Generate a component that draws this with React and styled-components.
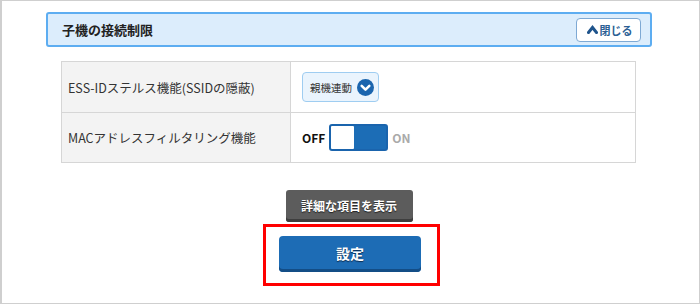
import React from "react";
import styled, { createGlobalStyle } from "styled-components";

const Global = createGlobalStyle`
  html, body { margin: 0; padding: 0; background: #fff; }
  body { font-family: "Noto Sans CJK JP", "Noto Sans", sans-serif; color: #333; }
`;

const Frame = styled.div`
  box-sizing: border-box;
  width: 700px;
  height: 304px;
  border: 1px solid #cfcfcf;
  border-left-width: 2px;
  padding: 11px 47px 0 44px;
  display: flex;
  flex-direction: column;
`;

const Header = styled.div`
  box-sizing: border-box;
  height: 35px;
  border: 2px solid #5dadf1;
  border-radius: 3px;
  background: #dcedfc;
  display: flex;
  align-items: center;
  justify-content: space-between;
  padding: 0 9px 0 14px;
`;

const Title = styled.h2`
  margin: 0;
  font-size: 13px;
  font-weight: 700;
  color: #222;
`;

const CloseButton = styled.button`
  box-sizing: border-box;
  width: 65px;
  height: 24px;
  background: #fff;
  border: 1px solid #7ea9d4;
  border-radius: 4px;
  display: flex;
  align-items: center;
  justify-content: center;
  gap: 2px;
  padding: 0 0 0 2px;
  font-family: inherit;
  font-size: 11px;
  font-weight: 700;
  color: #2c5f94;
`;

const Table = styled.div`
  margin: 14px 16px 0 15px;
  border: 1px solid #d6d6d6;
  display: grid;
  grid-template-columns: 229px 1fr;
`;

const Label = styled.div`
  height: 50px;
  box-sizing: border-box;
  background: #f3f3f3;
  border-right: 1px solid #d6d6d6;
  border-top: ${(p) => (p.$first ? "none" : "1px solid #d6d6d6")};
  display: flex;
  align-items: center;
  padding-left: 6px;
  font-size: 12.5px;
  color: #333;
`;

const Value = styled.div`
  height: 50px;
  box-sizing: border-box;
  border-top: ${(p) => (p.$first ? "none" : "1px solid #d6d6d6")};
  display: flex;
  align-items: center;
  padding-left: 11px;
  gap: 4px;
`;

const Select = styled.div`
  box-sizing: border-box;
  width: 77px;
  height: 30px;
  border: 1px solid #9fcdf1;
  border-radius: 4px;
  background: #eaf4fd;
  display: flex;
  align-items: center;
  justify-content: space-between;
  padding: 0 4px 0 7px;
  font-size: 10.5px;
  color: #333;
`;

const StateText = styled.span`
  font-size: 12px;
  font-weight: 700;
  color: ${(p) => (p.$on ? "#aaaaaa" : "#111")};
`;

const Toggle = styled.div`
  box-sizing: border-box;
  width: 59px;
  height: 27px;
  border: 2px solid #1a64ad;
  border-radius: 3px;
  background: #1c6db6;
  display: flex;
`;

const Knob = styled.div`
  width: 23px;
  height: 100%;
  background: #fff;
  border-radius: 1px;
`;

const Actions = styled.div`
  display: flex;
  flex-direction: column;
  align-items: center;
  margin-top: 27px;
  padding-left: 5px;
`;

const DetailButton = styled.button`
  box-sizing: border-box;
  width: 127px;
  height: 32px;
  border: none;
  border-radius: 3px;
  background: #5c5c5c;
  box-shadow: inset 0 -3px 0 #3e3e3e;
  color: #fff;
  font-family: inherit;
  font-size: 12px;
  font-weight: 700;
  text-shadow: 0 1px 1px #222;
  padding: 0 0 2px;
  margin-right: 5px;
`;

const Highlight = styled.div`
  box-sizing: border-box;
  margin-top: 2px;
  border: 3px solid #ff0000;
  padding: 9px 16px 11px 13px;
`;

const SubmitButton = styled.button`
  box-sizing: border-box;
  width: 142px;
  height: 36px;
  border: none;
  border-radius: 4px;
  background: #1d6cb5;
  box-shadow: inset 0 -3px 0 #134d86;
  color: #fff;
  font-family: inherit;
  font-size: 14px;
  font-weight: 700;
  text-shadow: 0 1px 1px #0b2d52;
  padding: 0 0 2px;
`;

const ChevronUp = () => (
  <svg width="11" height="9" viewBox="0 0 11 9">
    <polyline points="1.5,7.5 5.5,2.5 9.5,7.5" fill="none" stroke="#1f548c" strokeWidth="3" strokeLinecap="square" />
  </svg>
);

const DownCircle = () => (
  <svg width="17" height="17" viewBox="0 0 20 20">
    <circle cx="10" cy="10" r="10" fill="#1b65ae" />
    <polyline points="5.5,8 10,12.5 14.5,8" fill="none" stroke="#fff" strokeWidth="3" strokeLinecap="round" strokeLinejoin="round" />
  </svg>
);

export default function App() {
  return (
    <>
      <Global />
      <Frame>
        <Header>
          <Title>子機の接続制限</Title>
          <CloseButton>
            <ChevronUp />
            閉じる
          </CloseButton>
        </Header>
        <Table>
          <Label $first>ESS-IDステルス機能(SSIDの隠蔽)</Label>
          <Value $first>
            <Select>
              親機連動
              <DownCircle />
            </Select>
          </Value>
          <Label>MACアドレスフィルタリング機能</Label>
          <Value>
            <StateText>OFF</StateText>
            <Toggle>
              <Knob />
            </Toggle>
            <StateText $on>ON</StateText>
          </Value>
        </Table>
        <Actions>
          <DetailButton>詳細な項目を表示</DetailButton>
          <Highlight>
            <SubmitButton>設定</SubmitButton>
          </Highlight>
        </Actions>
      </Frame>
    </>
  );
}
